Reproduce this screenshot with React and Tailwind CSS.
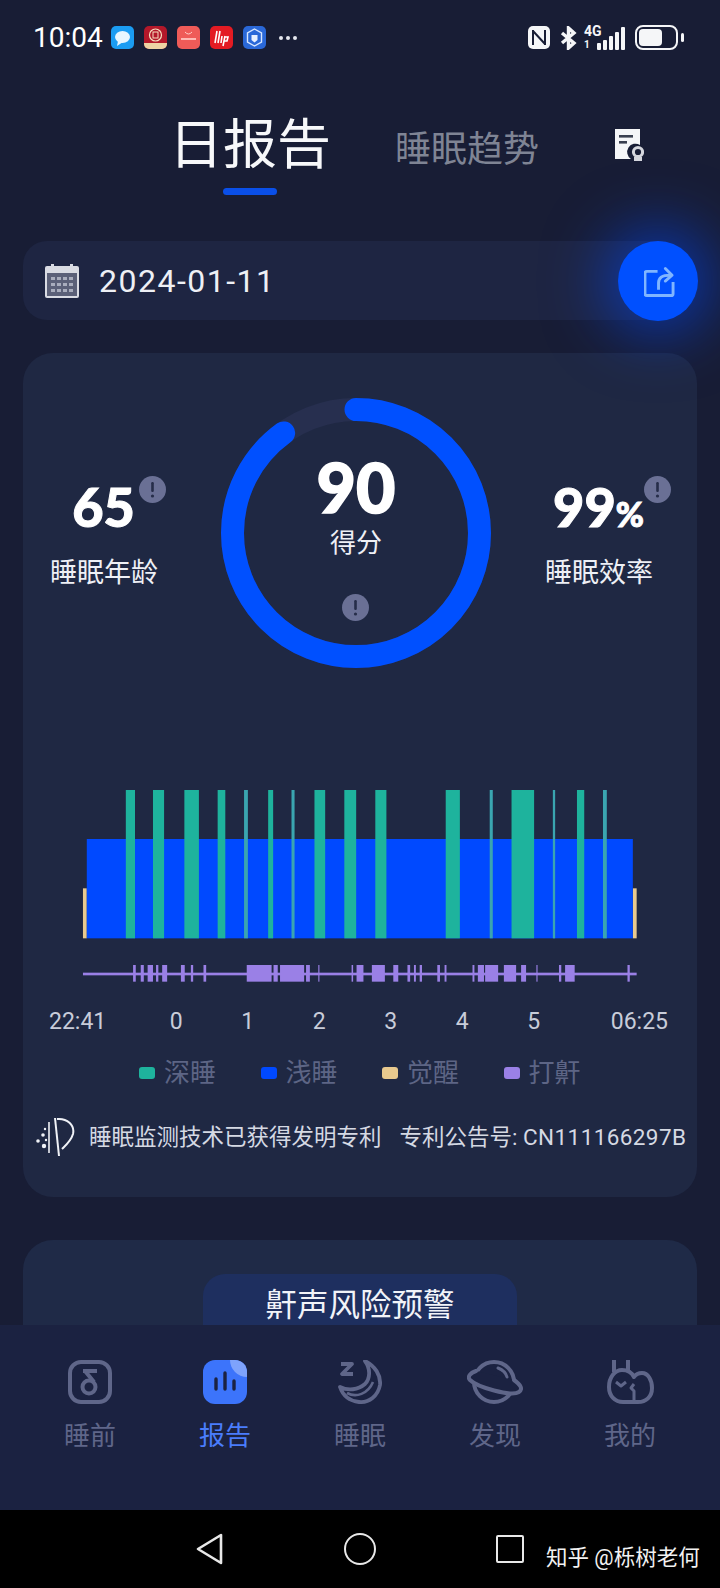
const cjk = 'font-["Roboto","Noto_Sans_CJK_SC",sans-serif]';

// bar spans read off the chart, in the chart's own 1568x690 space
const deepSleep = [
  [172, 196], [243, 272], [325, 363], [412, 432], [481, 491], [544, 557], [605, 613], [665, 693],
  [743, 774], [824, 853], [1008, 1045], [1123, 1131], [1180, 1239], [1288, 1294], [1351, 1370], [1419, 1429],
];
const snores = [
  [191, 198], [211, 219], [229, 243], [251, 257], [267, 280], [316, 326], [342, 348], [375, 382],
  [488, 553], [558, 569], [575, 638], [643, 653], [675, 678], [762, 766], [775, 793], [815, 849],
  [871, 884], [908, 915], [925, 930], [940, 946], [986, 993], [1005, 1010], [1078, 1083], [1092, 1108],
  [1111, 1145], [1160, 1192], [1205, 1218], [1245, 1248], [1304, 1310], [1320, 1345], [1483, 1489],
];

function SleepChart() {
  return (
    <svg viewBox="0 0 1568 690" preserveAspectRatio="none" className="block w-[600px] h-[230px] ml-[37px] mt-[102px]">
      <rect x="60" y="355" width="10" height="150" fill="#e8c98e" />
      <rect x="1497" y="355" width="10" height="150" fill="#e8c98e" />
      <rect x="70" y="207" width="1427" height="298" fill="#0049ff" />
      {deepSleep.map(([a, b]) => (
        <rect key={a} x={a} y="60" width={b - a} height="445" fill={b - a < 12 ? '#3aa5b0' : '#1eb39d'} />
      ))}
      <rect x="60" y="608" width="1447" height="8" fill="#9a80e6" />
      {snores.map(([a, b]) => (
        <rect key={a} x={a} y="585" width={b - a} height="50" fill="#9a80e6" />
      ))}
    </svg>
  );
}

function InfoBadge({ className }) {
  return (
    <div className={`absolute w-[27px] h-[27px] rounded-full bg-[#6a7095] flex items-center justify-center ${className}`}>
      <svg viewBox="0 0 27 27" className="w-[27px] h-[27px]">
        <rect x="12.2" y="6" width="2.6" height="10" rx="1.2" fill="#262d49" />
        <circle cx="13.5" cy="20" r="1.6" fill="#262d49" />
      </svg>
    </div>
  );
}

function ScoreRing() {
  const r = 123.5;
  const c = 2 * Math.PI * r;
  return (
    <div className="relative w-[270px] h-[270px] ml-[64px] shrink-0">
      <svg viewBox="0 0 270 270" className="w-[270px] h-[270px] -rotate-90">
        <circle cx="135" cy="135" r={r} fill="none" stroke="#272f4f" strokeWidth="23" />
        <circle cx="135" cy="135" r={r} fill="none" stroke="#0050ff" strokeWidth="23" strokeLinecap="round" strokeDasharray={`${c * 0.9} ${c}`} />
      </svg>
      <div className="absolute top-[49px] inset-x-0 text-center font-['Lato',sans-serif] font-black text-[68px] leading-[80px] text-white [-webkit-text-stroke:1.5px_white]">90</div>
      <div className={`absolute top-[127px] inset-x-0 text-center text-[26px] leading-[36px] text-[#eef0f6] ${cjk}`}>得分</div>
      <InfoBadge className="left-[121px] top-[196px]" />
    </div>
  );
}

function CalendarIcon() {
  return (
    <svg viewBox="0 0 34 34" className="w-[34px] h-[34px] shrink-0">
      <rect x="0" y="2" width="34" height="32" rx="2" fill="#d9dbe3" />
      <rect x="6" y="0" width="3" height="6" fill="#d9dbe3" />
      <rect x="25" y="0" width="3" height="6" fill="#d9dbe3" />
      <rect x="2" y="9" width="30" height="23" fill="#5b6078" />
      {[13, 19, 25].map((y) =>
        [6, 12, 18, 24].map((x) => <rect key={`${x}-${y}`} x={x} y={y} width="4" height="3" fill="#a9adbd" />)
      )}
    </svg>
  );
}

function ReportIcon() {
  return (
    <svg viewBox="0 0 30 32" className="w-[30px] h-[32px]">
      <path d="M1 0 H26 V16 A8 8 0 0 0 17 30 H1 Z" fill="#f5f6f8" />
      <rect x="5" y="6" width="14" height="2.6" fill="#3a4050" />
      <rect x="5" y="12" width="8" height="2.6" fill="#3a4050" />
      <circle cx="24" cy="23" r="4.6" fill="none" stroke="#d5d7de" strokeWidth="3" />
      <rect x="20" y="28" width="8" height="4" fill="#d5d7de" />
    </svg>
  );
}

function ShareIcon() {
  return (
    <svg viewBox="0 0 32 32" fill="none" stroke="#80b5ff" strokeWidth="3" strokeLinejoin="round" className="w-[31px] h-[32px] ml-[3px] mt-[1px]">
      <path d="M14 5 H3 A2 2 0 0 0 1 7 V28 A2 2 0 0 0 3 30 H28 A2 2 0 0 0 30 28 V16" />
      <path d="M15 24 V17 C15 11 19 9 27 9" />
      <path d="M22 2 L29 9 L22 15" strokeLinecap="round" />
    </svg>
  );
}

function PatentLogo() {
  return (
    <svg viewBox="0 0 40 40" fill="none" stroke="#f0f2f7" className="w-[40px] h-[40px] shrink-0">
      <path d="M14 5 V36" strokeWidth="1.6" />
      <path d="M20 1 L24 39" strokeWidth="2" />
      <path d="M22 2 C32 1 40 8 38 17 C36 24 30 29 27 32" strokeWidth="2" />
      <g fill="#f0f2f7" stroke="none">
        <circle cx="10" cy="12" r="1.2" />
        <circle cx="8" cy="18" r="1.8" />
        <circle cx="3" cy="24" r="1.8" />
        <circle cx="9" cy="29" r="2.2" />
        <circle cx="11" cy="23" r="1.2" />
      </g>
    </svg>
  );
}

function StatusBar() {
  return (
    <div className="h-[75px] shrink-0 flex items-center relative">
      <div className="ml-[33px] w-[78px] text-[28px] leading-[34px] text-white font-['Roboto',sans-serif]">10:04</div>
      <div className="flex items-center gap-[10px]">
        <svg viewBox="0 0 23 23" className="w-[23px] h-[23px]">
          <rect width="23" height="23" rx="5" fill="#1b9cf2" />
          <ellipse cx="11.5" cy="11" rx="7.5" ry="6" fill="#e8f6ff" />
          <path d="M7 15 L6 20 L12 16 Z" fill="#e8f6ff" />
        </svg>
        <svg viewBox="0 0 23 23" className="w-[23px] h-[23px]">
          <rect width="23" height="23" rx="5" fill="#b3182a" />
          <path d="M0 17 H23 V18 A5 5 0 0 1 18 23 H5 A5 5 0 0 1 0 18 Z" fill="#edd3a4" />
          <circle cx="11.5" cy="9" r="6" fill="none" stroke="#f7dfc0" strokeWidth="1.2" />
          <rect x="9" y="6" width="5" height="6" fill="none" stroke="#f7dfc0" strokeWidth="1" />
        </svg>
        <svg viewBox="0 0 23 23" className="w-[23px] h-[23px]">
          <rect width="23" height="23" rx="5" fill="#ef5b58" />
          <path d="M8 6 Q11.5 10 15 6" fill="none" stroke="#ffd0cb" strokeWidth="1" />
          <rect x="4" y="12" width="15" height="2" fill="#ffb9b4" />
        </svg>
        <svg viewBox="0 0 23 23" className="w-[23px] h-[23px]">
          <rect width="23" height="23" rx="5" fill="#e31b23" />
          <g stroke="#fff" strokeWidth="1.6" fill="none">
            <path d="M7 5 L5 17 M10 5 L8 17 M12 10 L11 17 M15 10 L13 20 M15 11 H18 L17 15 H14" />
          </g>
        </svg>
        <svg viewBox="0 0 23 23" className="w-[23px] h-[23px]">
          <rect width="23" height="23" rx="5" fill="#2a68d8" />
          <path d="M11.5 3 L18.5 7 V16 L11.5 20 L4.5 16 V7 Z" fill="none" stroke="#d7e6ff" strokeWidth="1.4" />
          <path d="M8.5 9 H14.5 V14 L11.5 16.5 L8.5 14 Z" fill="#e8f0ff" />
        </svg>
      </div>
      <div className="ml-[13px] flex gap-[3px]">
        <span className="w-[4px] h-[4px] rounded-full bg-[#e5e7ee]" />
        <span className="w-[4px] h-[4px] rounded-full bg-[#e5e7ee]" />
        <span className="w-[4px] h-[4px] rounded-full bg-[#e5e7ee]" />
      </div>
      <div className="ml-auto mr-[36px] flex items-center">
        <svg viewBox="0 0 22 23" className="w-[22px] h-[23px]">
          <rect width="22" height="23" rx="5" fill="#f5f6f8" />
          <path d="M5 4 V19 M5 5 L17 18 M17 4 V19" stroke="#181d35" strokeWidth="2" fill="none" />
        </svg>
        <svg viewBox="0 0 17 24" fill="none" stroke="#f5f6f8" strokeWidth="3.4" className="w-[17px] h-[24px] ml-[10px]">
          <path d="M2 7 L14 17 L8.5 22 V2 L14 7 L2 17" />
        </svg>
        <div className="relative w-[44px] h-[24px] ml-[7px]">
          <span className={`absolute left-0 top-[-2px] text-[14px] leading-[14px] font-bold text-[#f5f6f8] ${cjk}`}>4G</span>
          <span className={`absolute left-0 top-[13px] text-[10px] leading-[11px] font-bold text-[#f5f6f8] ${cjk}`}>1</span>
          <div className="absolute left-[13px] bottom-0 flex items-end gap-[2px]">
            <span className="w-[4px] h-[7px] rounded-[1px] bg-[#f5f6f8]" />
            <span className="w-[4px] h-[10px] rounded-[1px] bg-[#f5f6f8]" />
            <span className="w-[4px] h-[14px] rounded-[1px] bg-[#f5f6f8]" />
            <span className="w-[4px] h-[18px] rounded-[1px] bg-[#f5f6f8]" />
            <span className="w-[4px] h-[23px] rounded-[1px] bg-[#f5f6f8]" />
          </div>
        </div>
        <div className="ml-[7px] w-[43px] h-[25px] rounded-[8px] border-2 border-[#f5f6f8] p-[2px]">
          <div className="w-[23px] h-full rounded-[4px] bg-[#f5f6f8]" />
        </div>
        <span className="ml-[3px] w-[3px] h-[9px] rounded-full bg-[#f5f6f8]" />
      </div>
    </div>
  );
}

function Header() {
  return (
    <div className="h-[166px] shrink-0 flex flex-col">
      <div className="flex items-end h-[100px] pl-[169px]">
        <div className={`text-[54px] leading-[70px] -mb-[6px] text-[#f7f8fa] ${cjk}`}>日报告</div>
        <div className={`ml-[64px] -mb-[3px] text-[36px] leading-[56px] text-[#7f8494] ${cjk}`}>睡眠趋势</div>
        <div className="ml-[75px] mb-[14px]">
          <ReportIcon />
        </div>
      </div>
      <div className="ml-[223px] mt-[13px] w-[54px] h-[7px] rounded-full bg-[#0a4fe8]" />
    </div>
  );
}

function DateBar() {
  return (
    <div className="mx-[23px] relative h-[79px] shrink-0">
      <div className="h-full w-[640px] rounded-l-[24px] bg-[#1e2542] flex items-center pl-[22px]">
        <CalendarIcon />
        <div className="ml-[20px] text-[32px] leading-[40px] tracking-[1.5px] text-[#eef0f5] font-['Roboto',sans-serif]">2024-01-11</div>
      </div>
      <div className="absolute right-[-1px] top-0 z-10 w-[80px] h-[80px] rounded-full bg-[#0050ff] shadow-[0_0_60px_14px_rgba(0,72,255,0.55)] flex items-center justify-center">
        <ShareIcon />
      </div>
    </div>
  );
}

function SideStat({ value, unit, label, badgeClass, className = '' }) {
  return (
    <div className={`w-[107px] shrink-0 pt-[81px] text-center ${className}`}>
      <div className="relative h-[56px] font-['Lato',sans-serif] font-black text-[54px] leading-[56px] text-white whitespace-nowrap [-webkit-text-stroke:1px_white]">
        {value}
        {unit && <span className="text-[34px]">{unit}</span>}
        <InfoBadge className={badgeClass} />
      </div>
      <div className={`mt-[20px] text-[27px] leading-[36px] text-[#eef0f6] whitespace-nowrap ${cjk}`}>{label}</div>
    </div>
  );
}

const hours = ['0', '1', '2', '3', '4', '5'];
const legend = [
  ['深睡', 'bg-[#1eb39d]'],
  ['浅睡', 'bg-[#0049ff]'],
  ['觉醒', 'bg-[#e8c98e]'],
  ['打鼾', 'bg-[#9a80e6]'],
];

function SleepCard() {
  return (
    <div className="mx-[23px] mt-[33px] pt-[45px] pb-[40px] rounded-[30px] bg-[#1f2843]">
      <div className="flex pl-[27px]">
        <SideStat value="65" label="睡眠年龄" badgeClass="left-[89px] top-[-3px]" />
        <ScoreRing />
        <SideStat value="99" unit="%" label="睡眠效率" badgeClass="left-[99px] top-[-3px]" className="ml-[54px]" />
      </div>
      <SleepChart />
      <div className="mt-[7px] ml-[26px] mr-[29px] flex text-[23px] leading-[30px] text-[#c8ccd9] font-['Roboto',sans-serif]">
        <div className="w-[91.5px]">22:41</div>
        {hours.map((h) => (
          <div key={h} className="w-[71.5px] text-center">{h}</div>
        ))}
        <div className="flex-1 text-right">06:25</div>
      </div>
      <div className="mt-[18px] ml-[116px] flex gap-[44.5px]">
        {legend.map(([name, color]) => (
          <div key={name} className="flex items-center gap-[9px]">
            <span className={`w-[16px] h-[12px] rounded-[3px] ${color}`} />
            <span className={`text-[26px] leading-[36px] text-[#5d6585] ${cjk}`}>{name}</span>
          </div>
        ))}
      </div>
      <div className="mt-[26px] ml-[12px] flex items-center h-[40px]">
        <PatentLogo />
        <div className={`ml-[14px] text-[22.5px] leading-[30px] text-[#d5d9e3] whitespace-nowrap ${cjk}`}>睡眠监测技术已获得发明专利</div>
        <div className={`ml-[18px] text-[22.5px] leading-[30px] text-[#d5d9e3] whitespace-nowrap ${cjk}`}>
          专利公告号: <span className="tracking-[0.4px]">CN111166297B</span>
        </div>
      </div>
    </div>
  );
}

function RiskCard() {
  return (
    <div className="mx-[23px] mt-[43px] pt-[34px] h-[140px] rounded-t-[30px] bg-[#1f2a47] flex flex-col items-center">
      <div className={`w-[314px] h-[80px] pt-[11px] rounded-[22px] bg-[#1e2f5f] text-center text-[31.5px] leading-[42px] text-[#f1f3f8] ${cjk}`}>鼾声风险预警</div>
    </div>
  );
}

const iconStroke = '#5f6689';

const navItems = [
  {
    label: '睡前',
    icon: (
      <svg viewBox="0 0 44 44" fill="none" stroke={iconStroke} strokeWidth="4" className="w-[44px] h-[44px]">
        <rect x="2" y="2" width="40" height="40" rx="11" />
        <circle cx="21" cy="27" r="6.5" />
        <path d="M15 11 H29 M17 11 L26 22" />
      </svg>
    ),
  },
  {
    label: '报告',
    active: true,
    icon: (
      <svg viewBox="0 0 44 44" className="w-[44px] h-[44px]">
        <rect width="44" height="44" rx="12" fill="#3c74fb" />
        <path d="M27 0 H32 A12 12 0 0 1 44 12 V17 A17 17 0 0 1 27 0 Z" fill="#7ea3fc" />
        <g stroke="#1b2241" strokeWidth="3.4" strokeLinecap="round">
          <path d="M13 19 V29 M22 13 V29 M31 21 V29" />
        </g>
      </svg>
    ),
  },
  {
    label: '睡眠',
    icon: (
      <svg viewBox="0 0 44 44" fill="none" stroke={iconStroke} strokeWidth="3.8" strokeLinejoin="round" className="w-[44px] h-[44px]">
        <path d="M27 1 C37 6 43 15 42 25 C40 36 31 43 21 42 C12 41 5 36 2 27 C10 31 20 30 27 24 C32 19 33 9 27 1 Z" />
        <path d="M9 33 C18 38 30 34 35 22" strokeWidth="2.6" />
        <path d="M3 4 H14 L4 14 H15" strokeWidth="3.8" />
      </svg>
    ),
  },
  {
    label: '发现',
    icon: (
      <svg viewBox="0 0 56 44" fill="none" stroke={iconStroke} strokeWidth="4" strokeLinecap="round" className="w-[56px] h-[44px]">
        <circle cx="27" cy="22" r="20" />
        <path d="M9 11 C3 13 0 17 3 20 C10 27 44 37 52 32 C56 29 54 25 47 20" fill="#1b2241" />
        <path d="M31 8 C36 10 39 13 40 17" strokeWidth="3" />
      </svg>
    ),
  },
  {
    label: '我的',
    icon: (
      <svg viewBox="0 0 47 44" fill="none" stroke={iconStroke} strokeWidth="4" strokeLinejoin="round" className="w-[47px] h-[44px]">
        <path d="M7 0 V12 M21 0 V12" />
        <path d="M2 27 C2 17 8 10 15 10 C21 10 25 13 27 17 C29 14 32 13 35 13 C41 13 45 20 45 28 C45 37 39 42 31 42 H16 C8 42 2 36 2 27 Z" />
        <path d="M27 42 V31 L24 28 L27 24 M9 22 L14 26 L19 22" strokeWidth="3" />
      </svg>
    ),
  },
];

function BottomNav() {
  return (
    <div className="h-[185px] shrink-0 bg-[#1b2241] px-[22.5px] pt-[35px] grid grid-cols-5 items-start">
      {navItems.map((item) => (
        <div key={item.label} className="flex flex-col items-center">
          <div className="h-[44px] flex items-center justify-center">{item.icon}</div>
          <div className={`mt-[15px] text-[26px] leading-[34px] ${item.active ? 'text-[#4a7dfc]' : 'text-[#5f6689]'} ${cjk}`}>{item.label}</div>
        </div>
      ))}
    </div>
  );
}

function SystemBar() {
  return (
    <div className="relative h-[78px] shrink-0 bg-black flex items-center justify-center">
      <div className="w-[150px] flex justify-center">
        <svg viewBox="0 0 28 32" fill="none" stroke="#e8e8e8" strokeWidth="2.6" strokeLinejoin="round" className="w-[28px] h-[32px]">
          <path d="M25 2 V30 L2 16 Z" />
        </svg>
      </div>
      <div className="w-[150px] flex justify-center">
        <div className="w-[32px] h-[32px] rounded-full border-[2.6px] border-[#e8e8e8]" />
      </div>
      <div className="w-[150px] flex justify-center">
        <div className="w-[28px] h-[28px] rounded-[2px] border-[2.6px] border-[#e8e8e8]" />
      </div>
      <div className={`absolute left-[546px] top-[33px] text-[21.5px] leading-[30px] text-[#f2f2f2] whitespace-nowrap ${cjk}`}>知乎 @栎树老何</div>
    </div>
  );
}

export default function App() {
  return (
    <div className="w-[720px] h-[1588px] flex flex-col overflow-hidden bg-[#181d35]">
      <div className="flex-1 min-h-0 overflow-hidden flex flex-col">
        <StatusBar />
        <Header />
        <DateBar />
        <SleepCard />
        <RiskCard />
      </div>
      <BottomNav />
      <SystemBar />
    </div>
  );
}
